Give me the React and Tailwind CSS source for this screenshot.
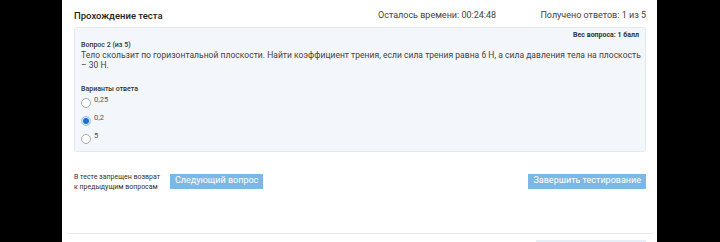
export default function App() {
  return (
    <div className="w-[720px] h-[242px] bg-black flex overflow-hidden" style={{ fontFamily: 'Roboto, "Liberation Sans", sans-serif' }}>
      <div className="ml-[62px] w-[595px] h-full bg-white flex flex-col pl-[12px] pr-[11px] relative">
        <div className="h-[5px]" />
        <div className="flex items-center h-[22px] text-[9px] text-[#333]">
          <div className="font-medium text-[9.5px] text-[#222] w-[304px]">Прохождение теста</div>
          <div className="flex-1 text-[#444]">Осталось времени: 00:24:48</div>
          <div className="text-[#444]">Получено ответов: 1 из 5</div>
        </div>
        <div className="h-[125px] rounded-[3px] border border-[#e3e9f1] bg-[#f3f6fb] pl-[6px] pr-[4px] pt-[2px] flex flex-col">
          <div className="text-right text-[7px] font-bold text-[#333] leading-[10px] pr-[2px]">Вес вопроса: 1 балл</div>
          <div className="text-[7px] font-medium text-[#333] leading-[9px] mt-[1px]">Вопрос 2 (из 5)</div>
          <div className="text-[8.5px] text-[#444] leading-[10px] tracking-[0.03px]">
            Тело скользит по горизонтальной плоскости. Найти коэффициент трения, если сила трения равна 6 Н, а сила давления тела на плоскость – 30 Н.
          </div>
          <div className="text-[7px] font-medium text-[#333] leading-[9px] mt-[15px]">Варианты ответа</div>
          <div className="flex flex-col gap-[8px] mt-[1px]">
            {[['0,25', false], ['0,2', true], ['5', false]].map(([l, c]) => (
              <div key={l} className="flex items-start h-[10px]">
                <div className={`mt-[3px] w-[10px] h-[10px] rounded-full border flex items-center justify-center ${c ? 'border-[#9cc4ec] bg-[#d7e8fa]' : 'border-[#aaa] bg-white'}`}>
                  {c && <div className="w-[6px] h-[6px] rounded-full bg-[#1f6fd6]" />}
                </div>
                <div className="ml-[3px] text-[7.5px] text-[#555] leading-[9px]">{l}</div>
              </div>
            ))}
          </div>
        </div>
        <div className="flex items-center mt-[18px]">
          <div className="text-[7px] text-[#333] leading-[10px] w-[96px] pt-[2px]">
            В тесте запрещен возврат<br />к предыдущим вопросам
          </div>
          <div className="h-[15px] px-[5px] bg-[#7cb8e6] text-white text-[9px] flex items-center">Следующий вопрос</div>
          <div className="flex-1" />
          <div className="h-[15px] px-[5px] bg-[#7cb8e6] text-white text-[9px] flex items-center">Завершить тестирование</div>
        </div>
        <div className="flex-1" />
        <div className="border-t border-[#ececec] -mx-[7px] h-[9px] flex justify-end pr-[7px]">
          <div className="mt-[6px] w-[110px] h-[3px] bg-[#e6eef6]" />
        </div>
      </div>
    </div>
  );
}
